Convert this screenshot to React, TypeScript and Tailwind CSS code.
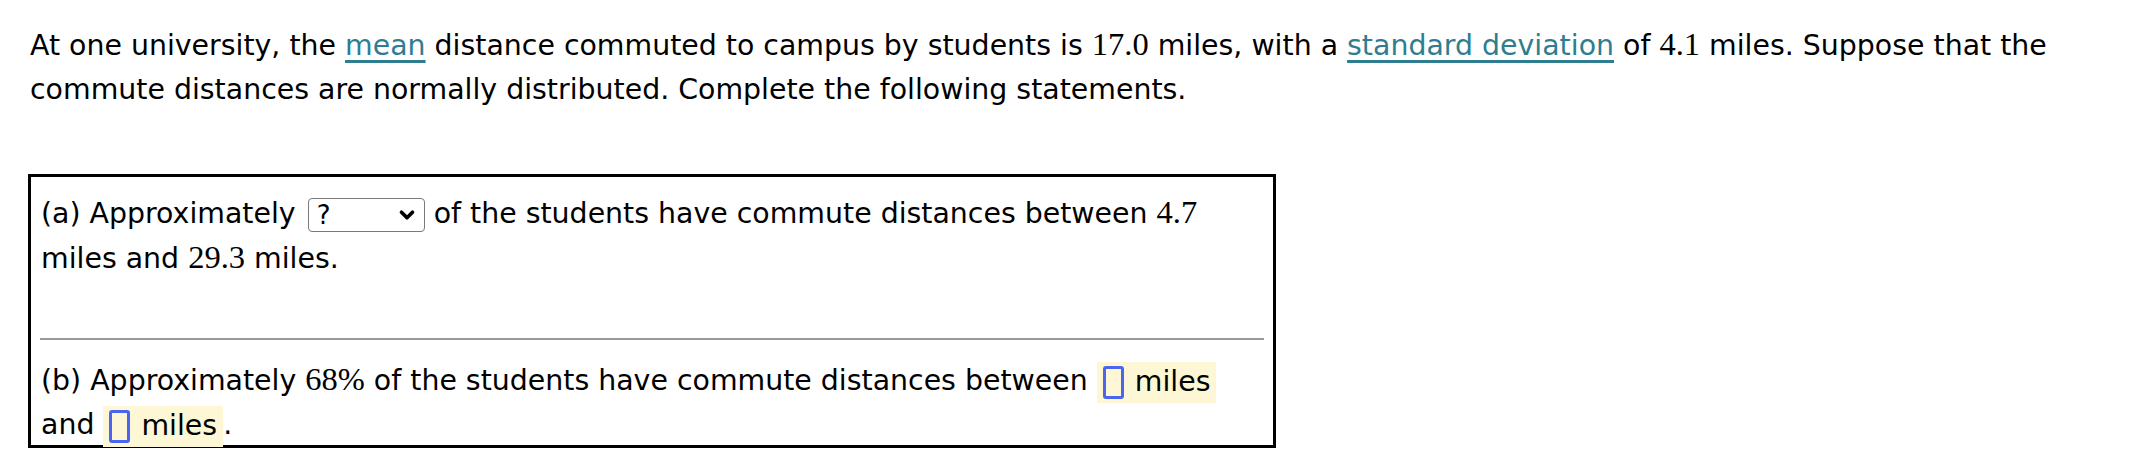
import React from "react";
import { ChevronDown } from "lucide-react";

function Num({ children }: { children: React.ReactNode }) {
  return <span className="font-['Liberation_Serif',serif] text-[32.5px] leading-none">{children}</span>;
}

function Link({ children }: { children: React.ReactNode }) {
  return (
    <span className="text-[#2f7d90] underline decoration-[3px] underline-offset-[5px]">
      {children}
    </span>
  );
}

function AnswerBox() {
  return (
    <span className="inline-flex items-center gap-[11px] bg-[#fdf7d6] h-[41px] px-[6px] align-middle leading-none">
      <span className="inline-block w-[21px] h-[33px] border-[3px] border-[#4a66f0] rounded-[3px] bg-[#fdf7d6]" />
      <span>miles</span>
    </span>
  );
}

export default function App() {
  return (
    <div className="bg-white w-[2132px] h-[474px] px-[30px] pt-[24px] text-[28.4px] leading-[45px] text-black font-['DejaVu_Sans','Verdana',sans-serif]">
      {/* Problem statement */}
      <p className="whitespace-nowrap leading-[44px]">
        At one university, the <Link>mean</Link> distance commuted to campus by students is <Num>17.0</Num> miles, with a{" "}
        <Link>standard deviation</Link> of <Num>4.1</Num> miles. Suppose that the
        <br />
        commute distances are normally distributed. Complete the following statements.
      </p>

      <div className="mt-[62px] -ml-[2px] w-[1248px] h-[274px] border-[3px] border-black pt-[14px] px-[9px]">
        {/* Part (a) */}
        <div className="whitespace-nowrap pl-[1px]">
          (a) Approximately{" "}
          <span className="ml-[3px] inline-flex items-center justify-between w-[117px] h-[34px] border-[1.5px] border-[#7a7a7a] rounded-[4px] pl-[8px] pr-[6px] align-middle text-[26px] leading-none">
            <span>?</span>
            <ChevronDown size={22} strokeWidth={4} />
          </span>{" "}
          of the students have commute distances between <Num>4.7</Num>
          <br />
          miles and <Num>29.3</Num> miles.
        </div>

        <hr className="mt-[57px] border-0 h-[2px] bg-[#999999]" />

        {/* Part (b) */}
        <div className="mt-[19px] whitespace-nowrap pl-[1px] leading-[44px]">
          (b) Approximately <Num>68%</Num> of the students have commute distances between <AnswerBox />
          <br />
          and <AnswerBox />.
        </div>
      </div>
    </div>
  );
}
